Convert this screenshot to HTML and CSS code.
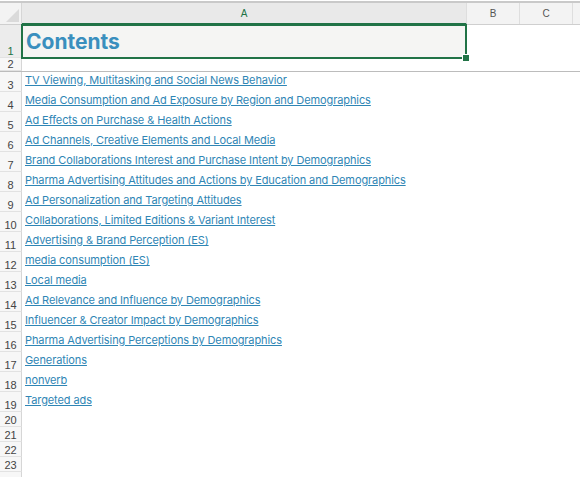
FILE: index.html
```html
<!DOCTYPE html>
<html lang="en">
<head>
    <meta charset="UTF-8">
    <title>Contents</title>
    <link rel="stylesheet" href="styles.css">
</head>
<body>
    <div class="sheet">
        <!-- column headers -->
        <div class="colheads">
            <div class="corner"><span class="tri"></span></div>
            <div class="colhead col-a active">A</div>
            <div class="colhead col-b">B</div>
            <div class="colhead col-c">C</div>
            <div class="colhead col-rest"></div>
        </div>

        <div class="row r-title">
            <div class="rowhead active">1</div>
            <div class="cell title-cell">Contents</div>
        </div>
        <div class="row r-small">
            <div class="rowhead">2</div>
            <div class="cell"></div>
        </div>

        <div class="row r-link"><div class="rowhead">3</div><div class="cell"><a href="#">TV Viewing, Multitasking and Social News Behavior</a></div></div>
        <div class="row r-link"><div class="rowhead">4</div><div class="cell"><a href="#">Media Consumption and Ad Exposure by Region and Demographics</a></div></div>
        <div class="row r-link"><div class="rowhead">5</div><div class="cell"><a href="#">Ad Effects on Purchase &amp; Health Actions</a></div></div>
        <div class="row r-link"><div class="rowhead">6</div><div class="cell"><a href="#">Ad Channels, Creative Elements and Local Media</a></div></div>
        <div class="row r-link"><div class="rowhead">7</div><div class="cell"><a href="#">Brand Collaborations Interest and Purchase Intent by Demographics</a></div></div>
        <div class="row r-link"><div class="rowhead">8</div><div class="cell"><a href="#">Pharma Advertising Attitudes and Actions by Education and Demographics</a></div></div>
        <div class="row r-link"><div class="rowhead">9</div><div class="cell"><a href="#">Ad Personalization and Targeting Attitudes</a></div></div>
        <div class="row r-link"><div class="rowhead">10</div><div class="cell"><a href="#">Collaborations, Limited Editions &amp; Variant Interest</a></div></div>
        <div class="row r-link"><div class="rowhead">11</div><div class="cell"><a href="#">Advertising &amp; Brand Perception (ES)</a></div></div>
        <div class="row r-link"><div class="rowhead">12</div><div class="cell"><a href="#">media consumption (ES)</a></div></div>
        <div class="row r-link"><div class="rowhead">13</div><div class="cell"><a href="#">Local media</a></div></div>
        <div class="row r-link"><div class="rowhead">14</div><div class="cell"><a href="#">Ad Relevance and Influence by Demographics</a></div></div>
        <div class="row r-link"><div class="rowhead">15</div><div class="cell"><a href="#">Influencer &amp; Creator Impact by Demographics</a></div></div>
        <div class="row r-link"><div class="rowhead">16</div><div class="cell"><a href="#">Pharma Advertising Perceptions by Demographics</a></div></div>
        <div class="row r-link"><div class="rowhead">17</div><div class="cell"><a href="#">Generations</a></div></div>
        <div class="row r-link"><div class="rowhead">18</div><div class="cell"><a href="#">nonverb</a></div></div>
        <div class="row r-link"><div class="rowhead">19</div><div class="cell"><a href="#">Targeted ads</a></div></div>

        <div class="row r-empty"><div class="rowhead">20</div><div class="cell"></div></div>
        <div class="row r-empty"><div class="rowhead">21</div><div class="cell"></div></div>
        <div class="row r-empty"><div class="rowhead">22</div><div class="cell"></div></div>
        <div class="row r-empty"><div class="rowhead">23</div><div class="cell"></div></div>
        <div class="row r-empty"><div class="rowhead"></div><div class="cell"></div></div>
    </div>
</body>
</html>
```

FILE: styles.css
```css
* {
    box-sizing: border-box;
    margin: 0;
    padding: 0;
}
body {
    background: #fff;
    font-family: 'Inter', 'Noto Sans', sans-serif;
    overflow: hidden;
}
.sheet {
    padding-top: 1px;
}

/* column headers */
.colheads {
    display: flex;
    height: 24px;
    border-top: 2px solid #c9c9c9;
    border-bottom: 1px solid #cfcfcf;
    background: #f3f3f3;
}
.corner {
    position: relative;
    width: 22px;
    border-right: 1px solid #d6d6d6;
    background: #f3f3f3;
}
.tri {
    position: absolute;
    right: 2px;
    bottom: 2px;
    width: 0;
    height: 0;
    border-left: 13px solid transparent;
    border-bottom: 13px solid #dadada;
}
.colhead {
    font-family: 'Liberation Sans', Arial, sans-serif;
    font-size: 10px;
    color: #555;
    text-align: center;
    line-height: 21px;
    border-right: 1px solid #dedede;
}
.col-a { width: 445px; }
.col-b { width: 53px; }
.col-c { width: 53px; }
.col-rest { flex: 1; border-right: none; }
.colhead.active {
    background: #e9e9e9;
    color: #217346;
    border-bottom: 2px solid #217346;
    margin-bottom: -1px;
}

/* rows */
.row {
    display: flex;
}
.rowhead {
    width: 22px;
    flex-shrink: 0;
    font-family: 'Liberation Sans', Arial, sans-serif;
    font-size: 11px;
    color: #444;
    text-align: center;
    background: #f7f7f7;
    border-right: 1px solid #d6d6d6;
    border-bottom: 1px solid #e2e2e2;
    display: flex;
    align-items: flex-end;
    justify-content: center;
}
.rowhead.active {
    color: #217346;
    background: #ececec;
}
.cell {
    flex: 1;
    padding-left: 3px;
}
.r-title { height: 33px; }
.r-small { height: 14px; border-bottom: 1px solid #bcbcbc; }
.r-link { height: 20px; }
.r-empty { height: 15px; }

.title-cell {
    position: relative;
    flex: 0 0 446px;
    margin-top: -1px;
    margin-left: -1px;
    height: 35px;
    padding-left: 3px;
    background: #f5f5f3;
    border: 2px solid #217346;
    font-size: 21px;
    font-weight: 700;
    color: #3a8fbe;
    line-height: 32px;
}
.title-cell::after {
    content: '';
    position: absolute;
    right: -5px;
    bottom: -5px;
    width: 6px;
    height: 6px;
    background: #217346;
    border: 1px solid #fff;
}

.r-link .cell {
    display: flex;
    align-items: flex-end;
    padding-bottom: 5px;
}
.r-link a {
    font-size: 11px;
    letter-spacing: -0.1px;
    color: #2f86b5;
    text-decoration: underline;
    white-space: nowrap;
    line-height: 14px;
}
```
